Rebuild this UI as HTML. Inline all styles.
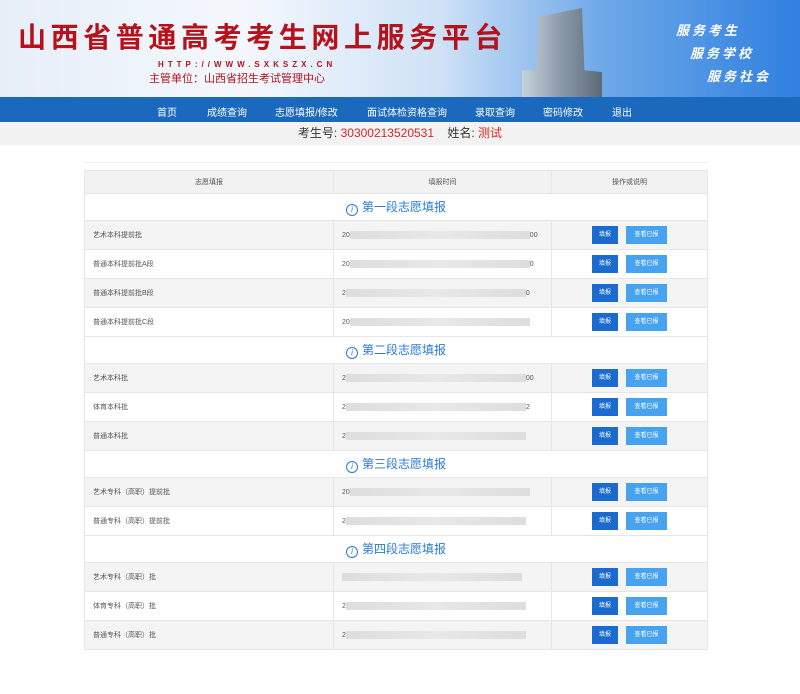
<!DOCTYPE html>
<html><head><meta charset="utf-8"><style>
*{margin:0;padding:0;box-sizing:border-box}
body{width:800px;height:694px;background:#fff;font-family:"Liberation Sans","Noto Sans CJK SC",sans-serif;position:relative;overflow:hidden}
.banner{position:absolute;left:0;top:0;width:800px;height:97px;background:linear-gradient(90deg,#e6eef8 0%,#f4f8fd 30%,#cfe2f6 55%,#6fa9e8 75%,#2f7fe0 100%)}
.title{position:absolute;left:18px;top:19px;font-size:28px;line-height:34px;font-weight:bold;color:#b5121b;letter-spacing:4.6px;font-family:"Noto Sans CJK SC",sans-serif;white-space:nowrap}
.url{position:absolute;left:158px;top:60px;font-size:8px;letter-spacing:4px;color:#b5121b;font-weight:bold}
.sub{position:absolute;left:149px;top:70px;font-size:11px;color:#b5121b}
.bld{position:absolute;left:522px;top:8px;width:80px;height:89px;background:linear-gradient(90deg,#c7d2dc,#8a99a8 50%,#5d6b78);clip-path:polygon(20% 10%,75% 0,78% 70%,100% 72%,100% 100%,0 100%,0 70%,18% 70%)}
.slog{position:absolute;color:#fff;font-style:italic;font-weight:bold;font-size:13px;letter-spacing:3px}
.nav{position:absolute;left:0;top:97px;width:800px;height:25px;background:#1a69bd;color:#fff;font-size:10px}
.nav span{position:absolute;top:7px}
.info{position:absolute;left:0;top:122px;width:800px;height:23px;background:#f2f2f2;text-align:center;font-size:12px;line-height:23px;color:#333}
.info b{color:#d92626;font-weight:normal}
.line{position:absolute;left:84px;top:162px;width:624px;height:1px;background:#eee}
table{position:absolute;left:84px;top:170px;width:624px;border-collapse:collapse;font-size:7px;color:#555}
td,th{border:1px solid #e6e6e6;height:29px;padding-left:8px}
th{font-weight:normal;background:#f2f2f2;height:23px;text-align:center;padding:0}
tr.sec td{background:#fff;height:27px;text-align:center;color:#2a7ad6;font-size:12px;padding:0}
tr.g td{background:#f4f4f4}
.blur{display:inline-block;width:180px;height:8px;background:linear-gradient(90deg,#ddd,#e8e8e8,#ddd);vertical-align:middle}
.b1,.b2{display:inline-block;height:18px;line-height:18px;color:#fff;font-size:6px;text-align:center;vertical-align:middle}
.b1{background:#1a6ad0;width:26px;margin-left:32px}
.b2{background:#47a3f0;width:41px;margin-left:8px}
.ic{display:inline-block;width:12px;height:12px;border:1.5px solid #2a7ad6;border-radius:50%;font-size:8px;line-height:9px;vertical-align:-1px;margin-right:4px;font-style:italic}
</style></head><body>
<div class="banner">
<div class="title">山西省普通高考考生网上服务平台</div>
<div class="url">HTTP://WWW.SXKSZX.CN</div>
<div class="sub">主管单位：山西省招生考试管理中心</div>
<div class="bld"></div>
<div class="slog" style="left:676px;top:20px">服务考生</div>
<div class="slog" style="left:690px;top:43px">服务学校</div>
<div class="slog" style="left:707px;top:66px">服务社会</div>
</div>
<div class="nav"><span style="left:157px">首页</span><span style="left:207px">成绩查询</span><span style="left:275px">志愿填报/修改</span><span style="left:367px">面试体检资格查询</span><span style="left:475px">录取查询</span><span style="left:543px">密码修改</span><span style="left:612px">退出</span></div>
<div class="info">考生号: <b>30300213520531</b>&nbsp;&nbsp;&nbsp;&nbsp;姓名: <b>测试</b></div>
<div class="line"></div>
<table>
<tr><th style="width:249px">志愿填报</th><th style="width:218px">填报时间</th><th>操作或说明</th></tr>
<tr class="sec"><td colspan="3"><span class="ic">i</span>第一段志愿填报</td></tr>
<tr class="g"><td>艺术本科提前批</td><td>20<span class="blur"></span>00</td><td><span class="b1">填报</span><span class="b2">查看已报</span></td></tr>
<tr><td>普通本科提前批A段</td><td>20<span class="blur"></span>0</td><td><span class="b1">填报</span><span class="b2">查看已报</span></td></tr>
<tr class="g"><td>普通本科提前批B段</td><td>2<span class="blur"></span>0</td><td><span class="b1">填报</span><span class="b2">查看已报</span></td></tr>
<tr><td>普通本科提前批C段</td><td>20<span class="blur"></span></td><td><span class="b1">填报</span><span class="b2">查看已报</span></td></tr>
<tr class="sec"><td colspan="3"><span class="ic">i</span>第二段志愿填报</td></tr>
<tr class="g"><td>艺术本科批</td><td>2<span class="blur"></span>00</td><td><span class="b1">填报</span><span class="b2">查看已报</span></td></tr>
<tr><td>体育本科批</td><td>2<span class="blur"></span>2</td><td><span class="b1">填报</span><span class="b2">查看已报</span></td></tr>
<tr class="g"><td>普通本科批</td><td>2<span class="blur"></span></td><td><span class="b1">填报</span><span class="b2">查看已报</span></td></tr>
<tr class="sec"><td colspan="3"><span class="ic">i</span>第三段志愿填报</td></tr>
<tr class="g"><td>艺术专科（高职）提前批</td><td>20<span class="blur"></span></td><td><span class="b1">填报</span><span class="b2">查看已报</span></td></tr>
<tr><td>普通专科（高职）提前批</td><td>2<span class="blur"></span></td><td><span class="b1">填报</span><span class="b2">查看已报</span></td></tr>
<tr class="sec"><td colspan="3"><span class="ic">i</span>第四段志愿填报</td></tr>
<tr class="g"><td>艺术专科（高职）批</td><td><span class="blur"></span></td><td><span class="b1">填报</span><span class="b2">查看已报</span></td></tr>
<tr><td>体育专科（高职）批</td><td>2<span class="blur"></span></td><td><span class="b1">填报</span><span class="b2">查看已报</span></td></tr>
<tr class="g"><td>普通专科（高职）批</td><td>2<span class="blur"></span></td><td><span class="b1">填报</span><span class="b2">查看已报</span></td></tr>
</table>
</body></html>
